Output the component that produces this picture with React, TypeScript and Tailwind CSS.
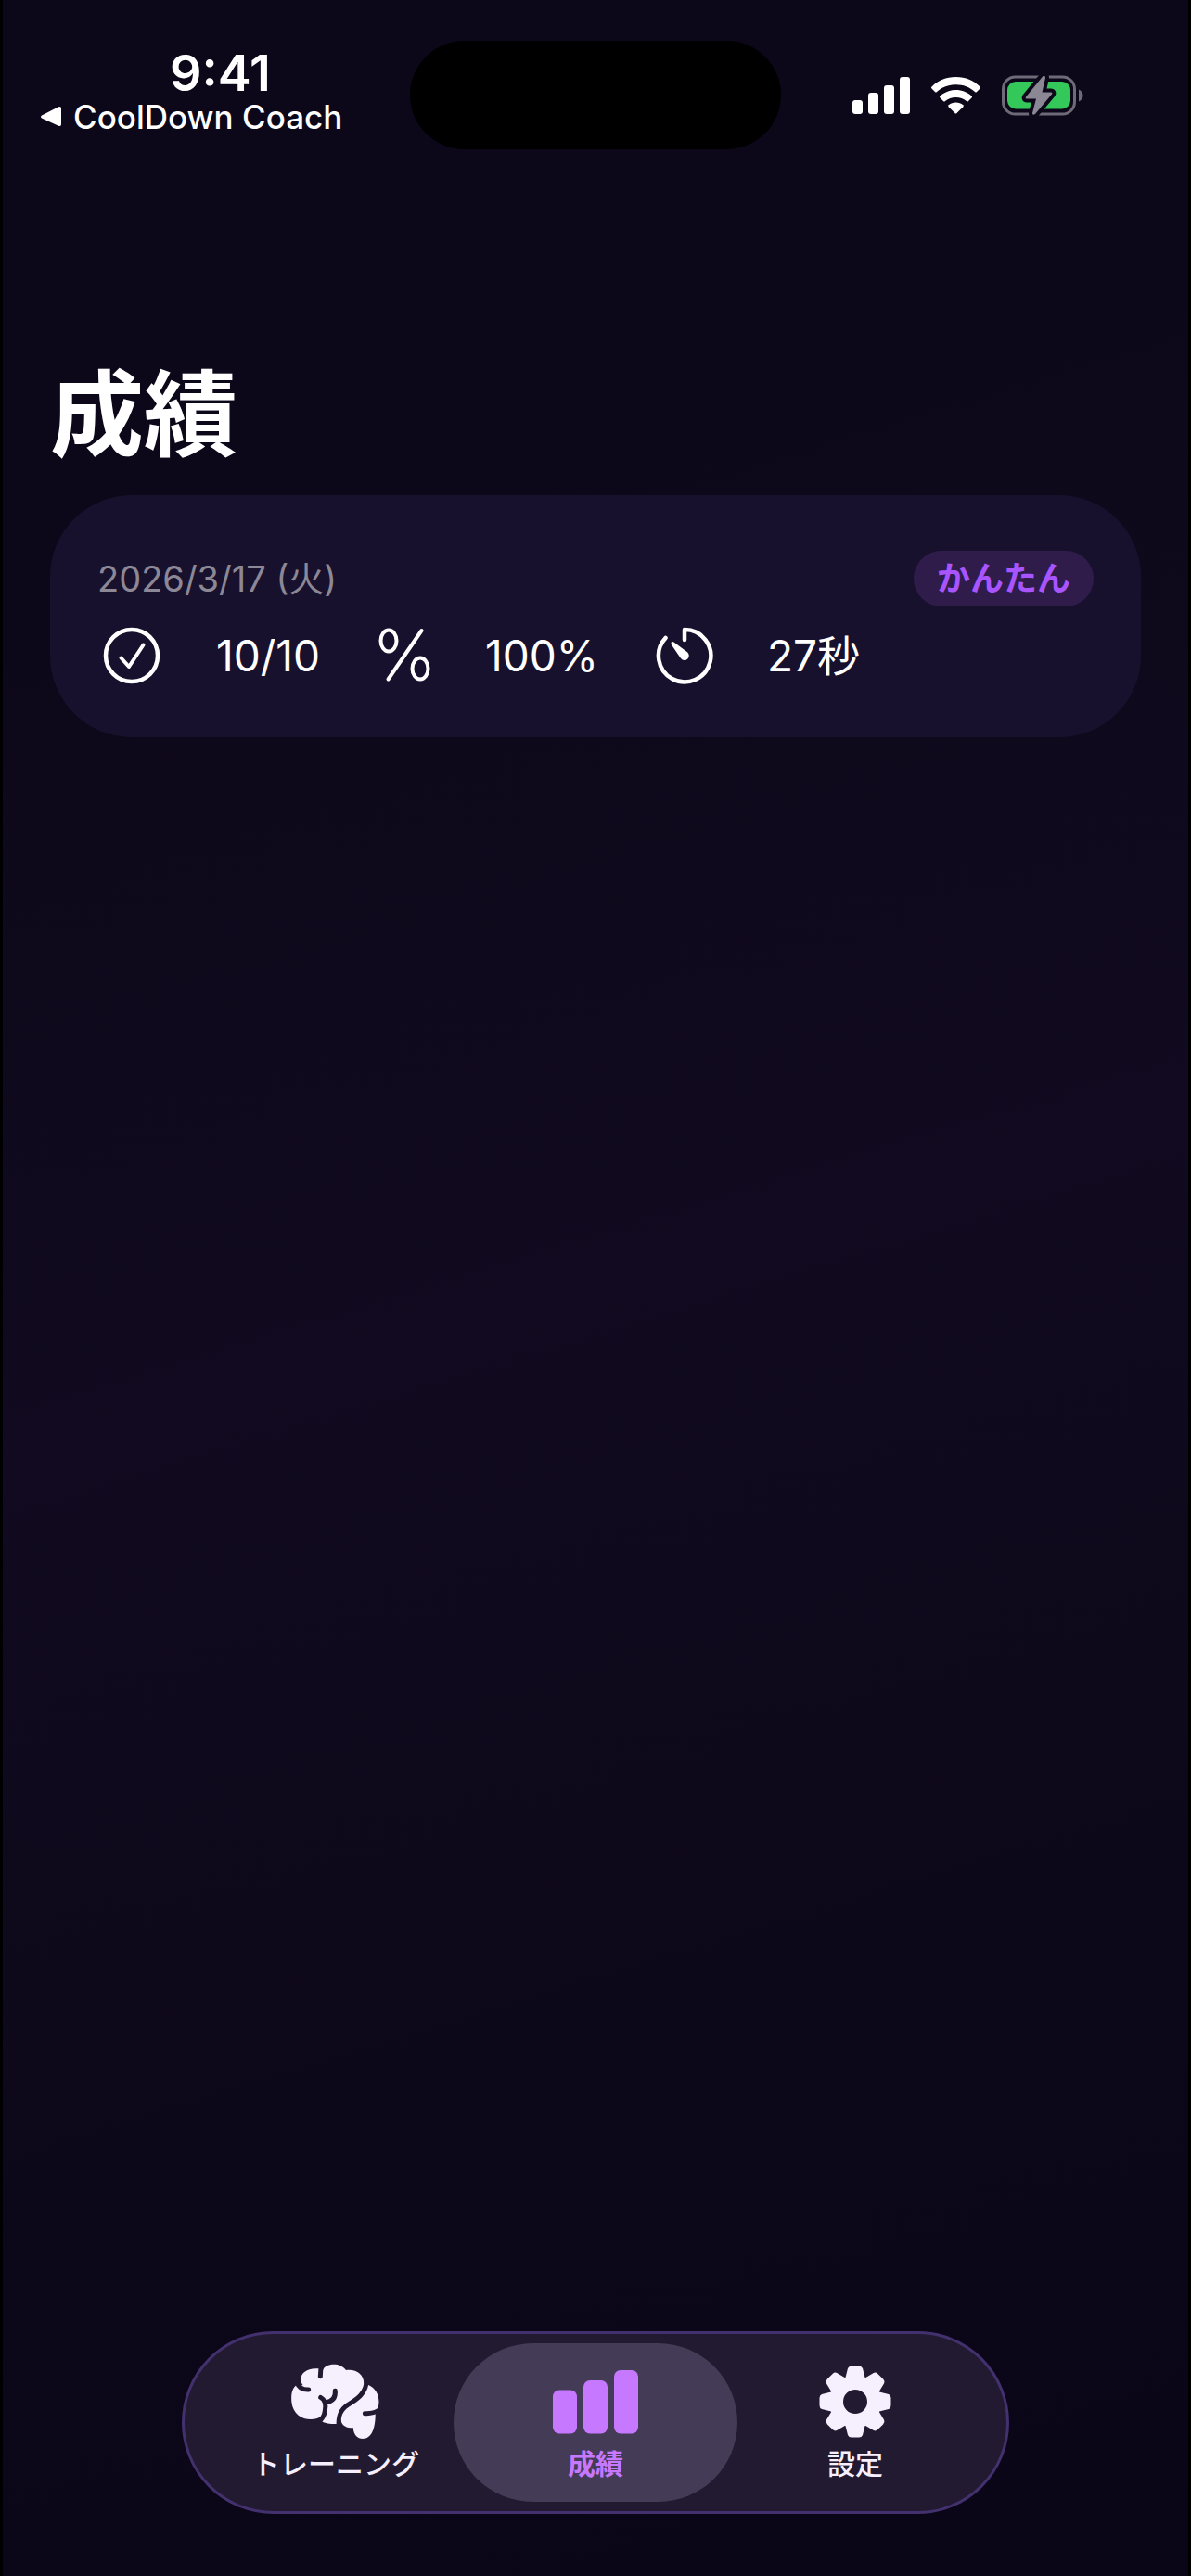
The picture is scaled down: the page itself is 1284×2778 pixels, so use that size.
import React, { useState } from "react";

const stats = [
  { icon: <CheckIcon />, value: "10/10" },
  { icon: <PercentIcon />, value: "100%" },
  { icon: <TimerIcon />, value: "27秒" },
];

const tabs = [
  { id: "training", label: "トレーニング", icon: <BrainIcon /> },
  { id: "results", label: "成績", icon: <BarsIcon /> },
  { id: "settings", label: "設定", icon: <GearIcon /> },
];

const App = () => {
  const [activeTab, setActiveTab] = useState("results");

  return (
    <div
      className="flex min-h-screen flex-col border-x-[3px] border-black text-white
        bg-linear-[163deg,#0c0719_0%,#0d0819_22%,#110a20_50%,#0d0819_75%,#0b0617_100%]
        font-['Inter','Noto_Sans_CJK_JP',sans-serif]"
    >
      <StatusBar />

      <main className="flex-1 px-[51px] pt-[212px]">
        <h1 className="text-[101px] leading-[146px] font-bold">成績</h1>

        <section className="mt-[14px] rounded-[88px] bg-[#18112d] px-[51px] pt-[60px] pb-[52px]">
          <div className="flex items-center justify-between">
            <time dateTime="2026-03-17" className="text-[38px] leading-[60px] text-[#8c8896]">
              2026/3/17 (火)
            </time>
            <span className="rounded-full bg-[#301c4b] px-[25px] text-[36px] leading-[60px] font-bold text-[#a855ff]">
              かんたん
            </span>
          </div>

          <ul className="mt-[17px] flex items-center gap-[62px] pl-1">
            {stats.map((stat, index) => (
              <li key={index} className="flex items-center gap-[58px]">
                {stat.icon}
                <span className="text-[46px] leading-[72px]">{stat.value}</span>
              </li>
            ))}
          </ul>
        </section>
      </main>

      <nav className="mx-auto mb-[67px] flex rounded-full border-[3px] border-[#43306f] bg-[#221a30] px-[23px] py-[10px]">
        {tabs.map((tab) => {
          const active = tab.id === activeTab;

          return (
            <button
              key={tab.id}
              onClick={() => setActiveTab(tab.id)}
              aria-current={active ? "page" : undefined}
              className={`relative flex h-[171px] w-[280px] items-start justify-center ${
                active ? "text-[#c678ff] font-bold" : "text-[#f6effe] font-medium"
              }`}
            >
              {/* selected pill is a bit wider than its tab */}
              {active && (
                <span className="absolute inset-y-0 -inset-x-[13px] rounded-full bg-[#443b56]" />
              )}
              <span className="relative flex flex-col items-center">
                {tab.icon}
                <span className="text-[30px] leading-[40px]">{tab.label}</span>
              </span>
            </button>
          );
        })}
      </nav>
    </div>
  );
};

// ---------------- STATUS BAR ----------------
function StatusBar() {
  return (
    <header className="grid h-[162px] grid-cols-[1fr_400px_1fr] items-start pt-11">
      <div className="flex flex-col items-start pt-[6px]">
        <span className="pl-[180px] text-[54px] leading-[58px] font-semibold">9:41</span>
        <a href="#" className="flex items-center gap-3 pl-10 text-[35px] leading-[36px] font-medium">
          <svg width="24" height="24" viewBox="0 0 24 24" fill="currentColor">
            <path d="M2 10.500L20 1.300Q23 0.500 23 3V20Q23 23 20 21.700L2 13.500Q0 12 2 10.500Z" />
          </svg>
          CoolDown Coach
        </a>
      </div>

      <div className="h-[117px] rounded-full bg-black" />

      <div className="flex items-center gap-[23px] pt-[37px] pl-[77px]">
        <svg width="62" height="42" viewBox="0 0 62 42" fill="currentColor">
          <rect x="0" y="26" width="11" height="15" rx="3" />
          <rect x="17" y="18" width="11" height="23" rx="3" />
          <rect x="34" y="10" width="11" height="31" rx="3" />
          <rect x="51" y="1" width="11" height="40" rx="3" />
        </svg>

        <svg width="53" height="42" viewBox="0 0 53 42" fill="currentColor">
          <path d="M26.500 1C37 1 46 5 52.500 11.500Q53.500 12.500 52.500 13.500L49 17Q48 18 47 17C41.500 12 34.500 9.300 26.500 9.300S11.500 12 6 17Q5 18 4 17L0.500 13.500Q-0.500 12.500 0.500 11.500C7 5 16 1 26.500 1Z" />
          <path d="M26.500 15C33 15 39 17.500 43.500 21.500Q44.500 22.500 43.500 23.500L40 27Q39 28 38 27C34.500 24.300 31 23 26.500 23S18.500 24.300 15 27Q14 28 13 27L9.500 23.500Q8.500 22.500 9.500 21.500C14 17.500 20 15 26.500 15Z" />
          <path d="M26.500 28.500C29.500 28.500 32 29.500 34.300 31.300Q35.200 32.200 34.300 33.200L27.500 40Q26.500 41 25.500 40L18.700 33.200Q17.800 32.200 18.700 31.300C21 29.500 23.500 28.500 26.500 28.500Z" />
        </svg>

        <svg width="88" height="44" viewBox="0 0 88 44">
          <rect x="1.500" y="2" width="77" height="40" rx="13" fill="none" stroke="#6e6a78" strokeWidth="3" />
          <rect x="6" y="7" width="68" height="29.500" rx="9" fill="#34c759" />
          <path d="M83 15.500C89 18 89 26 83 28.500Z" fill="#6e6a78" />
          <path
            d="M44.500 1L26 23.500Q25 25.500 27 25.500H37L33 41Q33 44 36 42L54 20.500Q55 18.500 53 18.500H43.500L47 3Q47 0 44.500 1Z"
            fill="#8b8794"
            stroke="#0d0819"
            strokeWidth="8"
            strokeLinejoin="round"
            paintOrder="stroke"
          />
        </svg>
      </div>
    </header>
  );
}

// ---------------- STAT ICONS ----------------
function CheckIcon() {
  return (
    <svg width="66" height="66" viewBox="0 0 66 66" fill="none" stroke="currentColor" strokeLinecap="round" strokeLinejoin="round">
      <circle cx="33" cy="33" r="28" strokeWidth="4.500" />
      <path d="M21.500 35.500L30 45L45.500 21.500" strokeWidth="4" />
    </svg>
  );
}

function PercentIcon() {
  return (
    <svg width="58" height="66" viewBox="0 0 58 66" fill="none" stroke="currentColor" strokeWidth="4" strokeLinecap="round">
      <ellipse cx="12" cy="17" rx="8.500" ry="11.500" />
      <ellipse cx="46" cy="47" rx="8.500" ry="11.500" />
      <path d="M47.500 6L11.500 58.500" />
    </svg>
  );
}

function TimerIcon() {
  return (
    <svg width="62" height="66" viewBox="0 0 62 66" fill="none" stroke="currentColor" strokeWidth="4.500" strokeLinecap="round" strokeLinejoin="round">
      <path d="M31 16V5A28.200 28.200 0 1 1 10.500 14" />
      <path
        d="M16.800 18.600Q16 20 17 21.500L26.800 35.800A4.900 4.900 0 1 0 34 29.300L19.500 18.500Q17.800 17.500 16.800 18.600Z"
        fill="currentColor"
        stroke="none"
      />
    </svg>
  );
}

// ---------------- TAB ICONS ----------------
function BrainIcon() {
  return (
    <svg width="96" height="110" viewBox="42 -39 288 330">
      {/* folds are cut out of the silhouette */}
      <mask id="brain-folds" maskUnits="userSpaceOnUse" x="30" y="-39" width="310" height="330">
        <rect x="30" y="-39" width="310" height="330" fill="white" />
        <g fill="none" stroke="black" strokeWidth="15" strokeLinecap="round">
          <path d="M60 88C66 104 80 112 98 111" />
          <path d="M141 30C136 46 136 58 136 68" />
          <path d="M137 136C150 143 155 160 151 180C149 195 143 205 130 217" />
          <path d="M184 115C186 138 175 150 153 152" />
          <path d="M286 78C286 125 250 145 225 160C202 175 192 195 196 232" />
          <path d="M280 188C298 189 312 186 326 177" />
        </g>
      </mask>
      <path
        d="M136 44C98 38 73 55 73 78C73 86 76 92 80 97L58 97C45 108 41 125 43 150C47 190 75 207 105 207C120 207 133 203 142 195L138 213C155 221 172 223 194 222L202 205C202 225 220 238 242 234C244 258 256 270 273 270C302 270 315 236 314 186C332 165 332 112 290 95L276 100C282 65 255 43 219 48C200 20 150 25 143 50Z"
        fill="currentColor"
        mask="url(#brain-folds)"
      />
    </svg>
  );
}

function BarsIcon() {
  return (
    <svg width="92" height="110" viewBox="0 0 92 110" fill="currentColor">
      <rect x="0" y="50.500" width="26" height="47" rx="7" />
      <rect x="33" y="40" width="26" height="57.500" rx="7" />
      <rect x="66" y="29" width="26" height="68.500" rx="7" />
    </svg>
  );
}

function GearIcon() {
  return (
    <svg width="78" height="110" viewBox="-39 -63 78 110" fill="currentColor">
      <circle r="20.500" fill="none" stroke="currentColor" strokeWidth="15" />
      {[0, 45, 90, 135, 180, 225, 270, 315].map((angle) => (
        <path
          key={angle}
          d="M-11 -24L-8 -36Q-7 -38.500 -4 -38.500H4Q7 -38.500 8 -36L11 -24Z"
          transform={`rotate(${angle})`}
        />
      ))}
    </svg>
  );
}

export default App;
